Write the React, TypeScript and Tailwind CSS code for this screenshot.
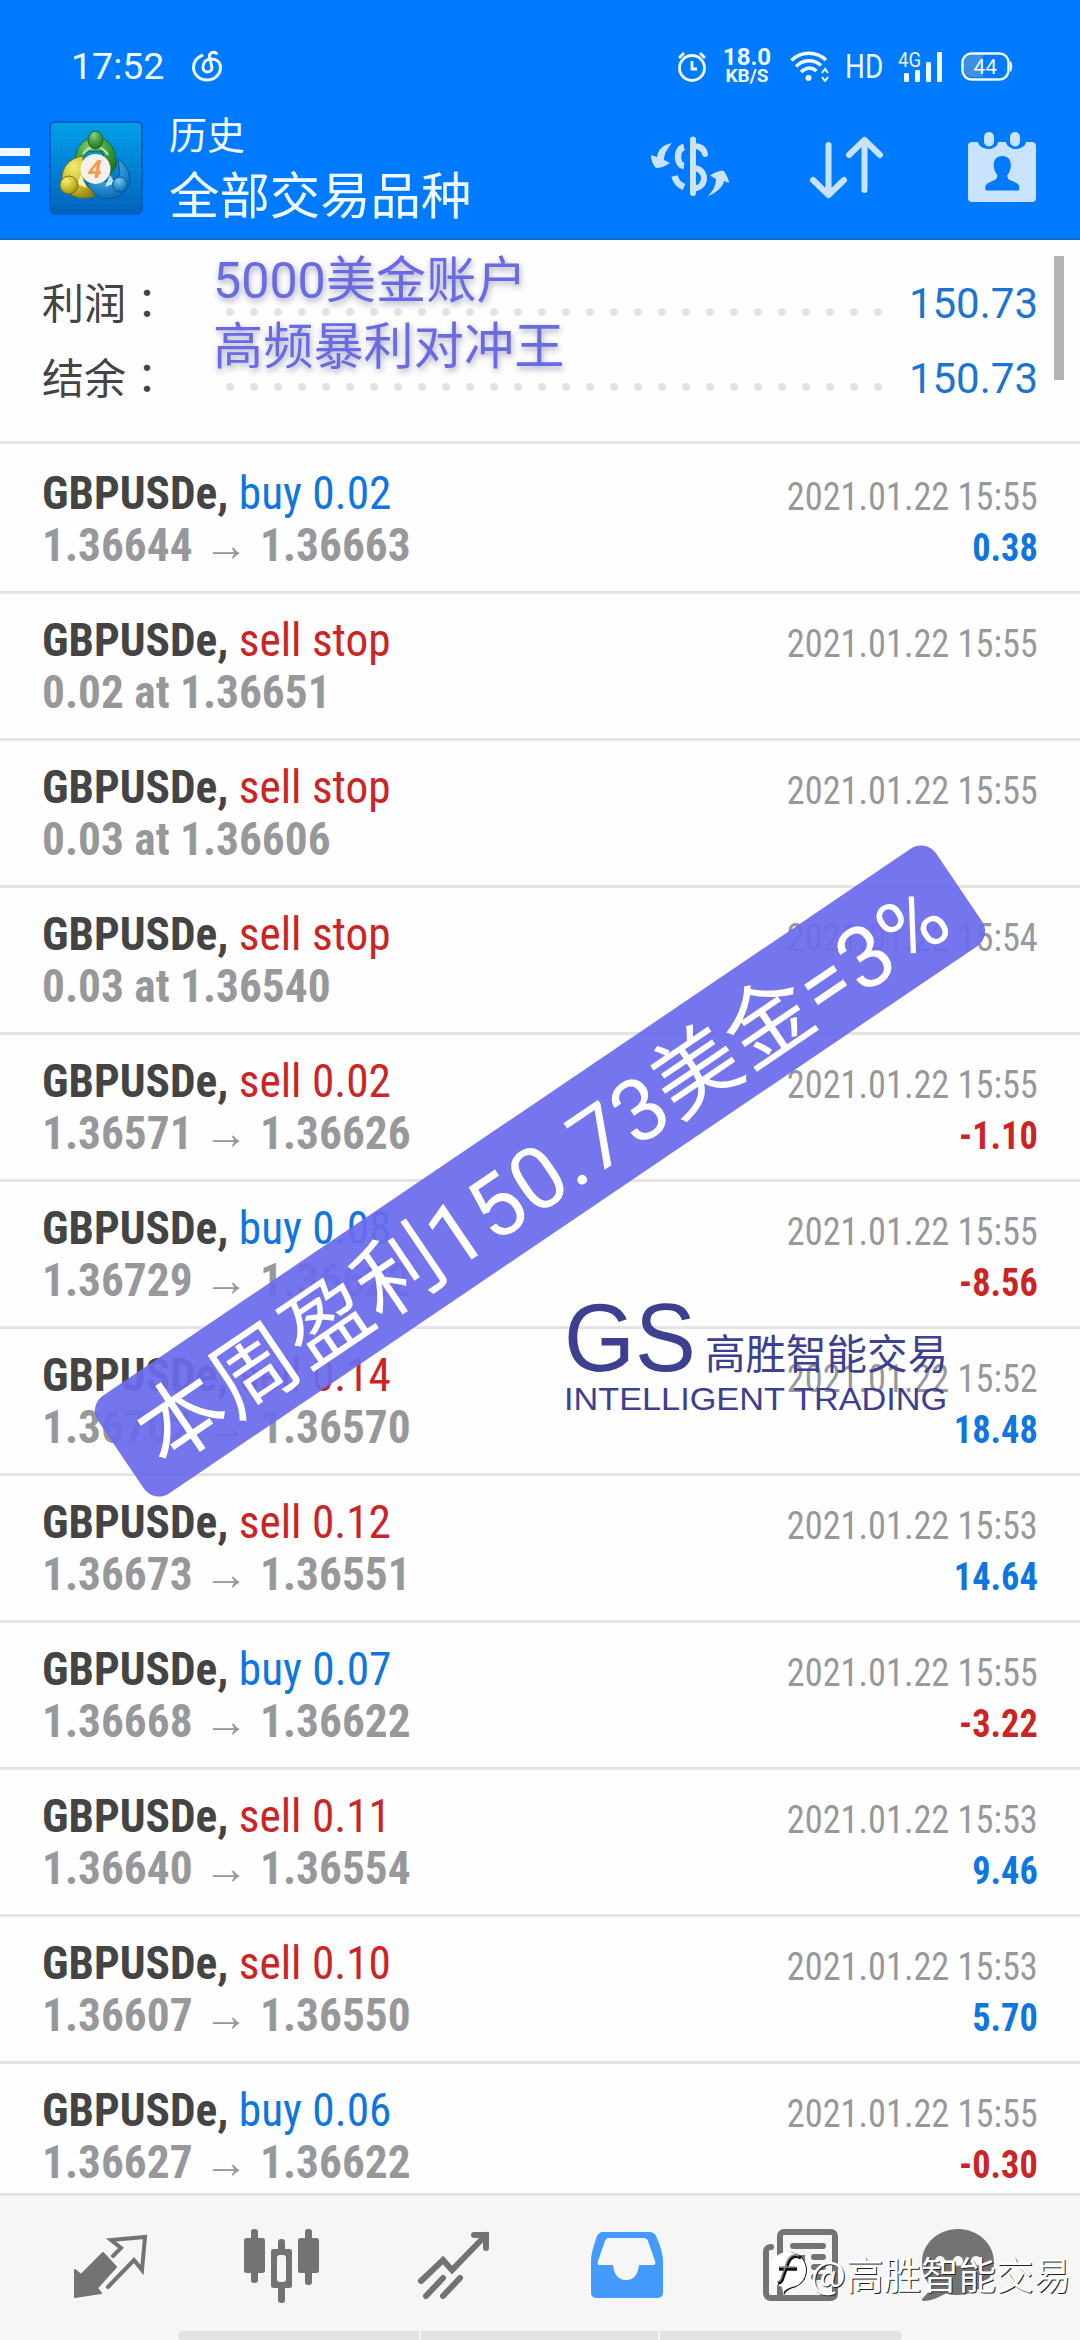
type Trade = {
  side: 'buy' | 'sell';
  action: string;
  detail: string;
  target?: string;
  time: string;
  profit?: string;
};

const trades: Trade[] = [
  { side: 'buy', action: 'buy 0.02', detail: '1.36644', target: '1.36663', time: '15:55', profit: '0.38' },
  { side: 'sell', action: 'sell stop', detail: '0.02 at 1.36651', time: '15:55' },
  { side: 'sell', action: 'sell stop', detail: '0.03 at 1.36606', time: '15:55' },
  { side: 'sell', action: 'sell stop', detail: '0.03 at 1.36540', time: '15:54' },
  { side: 'sell', action: 'sell 0.02', detail: '1.36571', target: '1.36626', time: '15:55', profit: '-1.10' },
  { side: 'buy', action: 'buy 0.08', detail: '1.36729', target: '1.36622', time: '15:55', profit: '-8.56' },
  { side: 'sell', action: 'sell 0.14', detail: '1.36702', target: '1.36570', time: '15:52', profit: '18.48' },
  { side: 'sell', action: 'sell 0.12', detail: '1.36673', target: '1.36551', time: '15:53', profit: '14.64' },
  { side: 'buy', action: 'buy 0.07', detail: '1.36668', target: '1.36622', time: '15:55', profit: '-3.22' },
  { side: 'sell', action: 'sell 0.11', detail: '1.36640', target: '1.36554', time: '15:53', profit: '9.46' },
  { side: 'sell', action: 'sell 0.10', detail: '1.36607', target: '1.36550', time: '15:53', profit: '5.70' },
  { side: 'buy', action: 'buy 0.06', detail: '1.36627', target: '1.36622', time: '15:55', profit: '-0.30' },
];

const StatusBar = () => (
  <div className="flex h-[104px] items-end justify-between pr-[67px] pb-[15px] pl-[71px] text-[#eefaff]">
    <div className="flex h-[46px] items-center gap-[27px]">
      <span className="w-[93px] font-[Roboto,sans-serif] text-[37.500px] leading-[46px]">17:52</span>
      <svg className="h-8 w-8" viewBox="0 0 32 32" fill="none" stroke="currentColor" strokeWidth="3" strokeLinecap="round">
        <path d="M11 5.500C5 8 2.500 13 2.500 17.500a13.500 12.500 0 0 0 27 0C29.500 11 24 8.500 19 9 14 9.500 12 14 12 17.500a4.500 4.500 0 0 0 9 0L18.500 7C18 3 22 1 25.500 3.500" />
      </svg>
    </div>
    <div className="flex h-[46px] items-center">
      {/* Alarm */}
      <svg className="h-8 w-[30px]" viewBox="0 0 30 32" fill="none" stroke="currentColor" strokeWidth="2.8">
        <circle cx="15" cy="18" r="12.500" />
        <path d="M15 11v8h5M2 8l5-5M28 8l-5-5" />
      </svg>
      <div className="ml-4 flex w-[48px] flex-col items-center font-[Roboto,sans-serif] font-bold">
        <span className="text-[24px] leading-[20px]">18.0</span>
        <span className="text-[19px] leading-[18px]">KB/S</span>
      </div>
      {/* Wifi */}
      <svg className="ml-[19px] h-8 w-10" viewBox="0 0 40 32" fill="none" stroke="currentColor" strokeWidth="3.5">
        <path d="M1.500 10.500C11 1 26 1 36 10M6 16.500C13 9 24 9 31 15.500M11 22C16 17 22 17 26.500 21" />
        <circle cx="18.500" cy="28" r="3" fill="currentColor" stroke="none" />
        <path d="M32 23l3-4 3 4M32 27l3 4 3-4" strokeWidth="2" />
      </svg>
      <span className="ml-[15px] w-9 font-[Roboto,sans-serif] text-[34px] leading-[46px]">
        <span className="inline-block origin-left scale-x-[0.82]">HD</span>
      </span>
      {/* Mobile signal */}
      <svg className="ml-[17px] h-10 w-[46px]" viewBox="0 -4 46 40" fill="currentColor">
        <text x="0" y="17" fontSize="21" fontFamily="Roboto, sans-serif" textLength="23" lengthAdjust="spacingAndGlyphs">4G</text>
        <rect x="6" y="23" width="5" height="9" rx="1" />
        <rect x="17" y="20" width="5" height="12" rx="1" />
        <rect x="28" y="12" width="5" height="20" rx="1" />
        <rect x="39" y="2" width="5" height="30" rx="1" />
      </svg>
      {/* Battery */}
      <svg className="ml-[17px] h-8 w-[52px]" viewBox="0 0 52 32" fill="none">
        <path d="M11 5h11v22H11a8 8 0 0 1-8-8v-6a8 8 0 0 1 8-8z" fill="#3d8fe0" />
        <rect x="1.500" y="3.500" width="46" height="26" rx="9" stroke="currentColor" strokeWidth="2.500" />
        <path d="M49 11c3 1 3 10 0 11z" fill="currentColor" />
        <text x="12.500" y="24" fontSize="21" fontFamily="Roboto, sans-serif" fill="currentColor">44</text>
      </svg>
    </div>
  </div>
);

const AppLogo = () => (
  <svg className="h-24 w-24" viewBox="0 0 96 96">
    <defs>
      <linearGradient id="tile" x1="0" y1="0" x2="0" y2="1">
        <stop offset="0" stopColor="#00a0ea" />
        <stop offset="1" stopColor="#0062bd" />
      </linearGradient>
      <radialGradient id="green" cx="0.4" cy="0.25" r="0.8">
        <stop offset="0" stopColor="#8fd07c" />
        <stop offset="0.5" stopColor="#3f9f3e" />
        <stop offset="1" stopColor="#1c6d2a" />
      </radialGradient>
      <radialGradient id="yellow" cx="0.35" cy="0.25" r="0.9">
        <stop offset="0" stopColor="#f4ec70" />
        <stop offset="0.6" stopColor="#c5b41f" />
        <stop offset="1" stopColor="#7d7a14" />
      </radialGradient>
      <radialGradient id="sky" cx="0.4" cy="0.25" r="0.9">
        <stop offset="0" stopColor="#7cc8ee" />
        <stop offset="0.6" stopColor="#1f86cc" />
        <stop offset="1" stopColor="#075a9c" />
      </radialGradient>
    </defs>
    <rect x="2" y="2" width="92" height="92" rx="5" fill="url(#tile)" stroke="#0560c0" strokeWidth="2" />
    <path d="M16 2v92M32 2v92M48 2v92M64 2v92M80 2v92M2 18h92M2 34h92M2 50h92M2 66h92M2 82h92" stroke="#ffffff" strokeOpacity="0.05" />
    <path d="M27 44C26 26 38 17 47.500 17S70 26 68 47l-6 8-8-24H41z" fill="url(#green)" stroke="#1d6630" />
    <path d="M35 34c3-5 8-7 12-7s10 2 13 8" fill="none" stroke="#b9e6a8" strokeWidth="2" />
    <path d="M70 39c10 6 14 18 10 28-5 9-16 13-25 11-8-2-14-9-16-15l24-2 9-6z" fill="url(#sky)" stroke="#0c5793" />
    <path d="M35 36c-14 2-21 12-21 22 0 13 12 21 24 20 4 0 7-1 9-3L36 62z" fill="url(#yellow)" stroke="#77731b" />
    <path d="M33 55l-4 9 10 4zM62 55l5 8-10 4z" fill="#ffffff" fillOpacity="0.75" />
    <ellipse cx="47.500" cy="20" rx="7.500" ry="9" fill="url(#green)" stroke="#1d6630" />
    <circle cx="21" cy="65" r="9" fill="url(#yellow)" stroke="#77731b" />
    <circle cx="72" cy="64.500" r="7.500" fill="url(#sky)" stroke="#0c5793" />
    <circle cx="47.500" cy="49" r="15" fill="#f3f0ee" />
    <text x="47" y="58" textAnchor="middle" fontSize="25" fontWeight="700" fontStyle="italic" fontFamily="Roboto, sans-serif" fill="#f79a4c">4</text>
  </svg>
);

const TitleBar = () => (
  <div className="flex h-[136px] items-start">
    <div className="mt-11 flex w-[30px] flex-col gap-[10px]">
      <div className="h-2 bg-[#eefaff]" />
      <div className="h-2 bg-[#eefaff]" />
      <div className="h-2 bg-[#eefaff]" />
    </div>
    <div className="mt-4 ml-[18px]">
      <AppLogo />
    </div>
    <div className="mt-[3px] ml-[25px] flex flex-col font-['Noto_Sans_CJK_SC',sans-serif] text-[#eefaff]">
      <span className="text-[38px] leading-[52px]">历史</span>
      <span className="text-[50.400px] leading-[68px]">全部交易品种</span>
    </div>
    <div className="mt-7 ml-auto flex items-start pr-[42px] text-[#c9e3ff]">
      {/* Symbol filter */}
      <svg className="h-[72px] w-20" viewBox="0 0 80 72" fill="none" stroke="currentColor">
        <path d="M43 7.500v53.500" strokeWidth="6" strokeLinecap="round" />
        <path d="M43 14c7 0 11 3 12 8M43 36c7 0 11 5 11 10.500S50 56 43 57" strokeWidth="6" strokeLinecap="round" />
        <path d="M34 15c-8 2-8 18 0 19M34 55c-5-2-8-5-9.500-11" strokeWidth="6.500" />
        <path d="M22 11C12 13 8 18 7 25L1 23C1 29 4 34 6 36C10 36 16 34 20 31L14 28C14 22 17 17 22 11z" fill="currentColor" stroke="none" />
        <path d="M58 64C68 60 73 54 74 49L79 51C79 47 76 43 74 39C70 38 64 41 60 43.500L66 47C66 53 63 59 58 64z" fill="currentColor" stroke="none" />
      </svg>
      {/* Sort */}
      <svg className="ml-[77px] h-[72px] w-20" viewBox="0 0 80 72" fill="none" stroke="currentColor" strokeWidth="6" strokeLinecap="round" strokeLinejoin="round">
        <path d="M21.500 13v50M6 48l15.500 15L37 48M57.500 58V8M42 23L57.500 8 73 23" />
      </svg>
      {/* Period */}
      <svg className="ml-[79px] h-[74px] w-[72px]" viewBox="0 0 72 74" fill="currentColor">
        <path d="M6 10h6c1 9 20 9 20 0h8c1 9 19 9 20 0h6a4 4 0 0 1 4 4v52a4 4 0 0 1-4 4H6a4 4 0 0 1-4-4V14a4 4 0 0 1 4-4z" />
        <rect x="15.500" y="-3" width="15" height="20" rx="7.500" fill="#007aff" />
        <rect x="41.500" y="-3" width="15" height="20" rx="7.500" fill="#007aff" />
        <rect x="18" y="0" width="10" height="14.500" rx="5" />
        <rect x="44" y="0" width="10" height="14.500" rx="5" />
        <path d="M36.300 24c6 0 9 4.500 8.500 10-.3 4-1.500 7-3.500 9 0 5 3 5 7 7 5 2 5 4 5 7a1.500 1.500 0 0 1-1.500 1.500h-31a1.500 1.500 0 0 1-1.500-1.500c0-3 0-5 5-7 4-2 7-2 7-7-2-2-3.200-5-3.500-9-.5-5.500 2.500-10 8.500-10z" fill="#007aff" />
      </svg>
    </div>
  </div>
);

const SummaryLine = ({ label, value }: { label: string; value: string }) => (
  <div className="flex h-[75px] items-center">
    <span className="-mt-1.5 w-[176px] font-['Noto_Sans_CJK_TC',sans-serif] text-[42px] leading-[69px] text-[#444]">{label}：</span>
    <div className="mt-4 h-2 w-[672px] bg-[radial-gradient(circle,#e3e3e3_3.5px,transparent_4.5px)] bg-[length:24px_8px]" />
    <span className="ml-auto font-[Roboto,sans-serif] text-[42px] leading-[75px] text-[#1c74d2]">{value}</span>
  </div>
);

const Summary = () => (
  <div className="relative h-[204px] border-b-[3px] border-[#e4e4e4] pt-[26px] pr-[42px] pl-[42px]">
    <SummaryLine label="利润" value="150.73" />
    <SummaryLine label="结余" value="150.73" />
    <div className="absolute top-4 right-4 h-[124px] w-[10px] bg-[#b3b3b3]" />
    <div className="absolute top-[8px] left-[213px] font-[Roboto,'Noto_Sans_CJK_SC',sans-serif] text-[50.200px] leading-[66px] text-[#6a6ae2] [text-shadow:1px_3px_6px_rgba(60,60,120,0.45)]">
      <div>5000美金账户</div>
      <div>高频暴利对冲王</div>
    </div>
  </div>
);

const TradeRow = ({ trade }: { trade: Trade }) => (
  <div className="flex h-[147px] shrink-0 justify-between border-b-[3px] border-[#e4e4e4] px-[42px] font-['Roboto_Condensed',Roboto,sans-serif] [font-stretch:75%]">
    <div className="origin-left scale-x-[0.964] pt-5 text-[47px] leading-[52px] whitespace-nowrap">
      <div>
        <span className="font-bold text-[#444]">GBPUSDe, </span>
        <span className={trade.side === 'buy' ? 'text-[#0f76e0]' : 'text-[#cc2424]'}>{trade.action}</span>
      </div>
      <div className="flex font-bold text-[#97989b]">
        <span>{trade.detail}</span>
        {trade.target && (
          <>
            <span className="w-[70px] text-center font-['Liberation_Sans',sans-serif] text-[46px] font-normal">→</span>
            <span>{trade.target}</span>
          </>
        )}
      </div>
    </div>
    <div className="origin-right scale-x-[0.955] pt-[25px] text-right text-[38px] leading-[51px]">
      <div className="text-[#97989b]">2021.01.22 {trade.time}</div>
      {trade.profit && (
        <div className={trade.profit.startsWith('-') ? 'font-bold text-[#cc2424]' : 'font-bold text-[#0f76e0]'}>
          {trade.profit}
        </div>
      )}
    </div>
  </div>
);

/** Sticker placed across the list with the weekly result */
const ProfitBanner = () => (
  <div className="absolute top-[1112px] left-[34px] flex h-[118px] w-[1012px] -rotate-[34.1deg] items-center justify-center rounded-[18px] bg-[#6a6cec]/93 pt-3 font-[Roboto,'Noto_Sans_CJK_SC',sans-serif] text-[86.500px] leading-[106px] tracking-[0.9px] whitespace-nowrap text-white">
    本周盈利150.73美金=3%
  </div>
);

const BrandMark = () => (
  <div className="absolute top-[1296px] left-[564px] flex flex-col text-[#3d4090]">
    <div className="flex items-end">
      <span className="w-[141px] font-['Liberation_Sans',sans-serif] text-[96px] leading-[84px]">
        <span className="inline-block origin-left scale-x-[0.95]">GS</span>
      </span>
      <span className="mb-[3px] font-['Noto_Sans_CJK_SC',sans-serif] text-[40.500px] leading-[50px]">高胜智能交易</span>
    </div>
    <span className="origin-left scale-x-[1.105] self-start font-['Liberation_Sans',sans-serif] text-[31px] leading-[40px] whitespace-nowrap">
      INTELLIGENT TRADING
    </span>
  </div>
);

const TabBar = () => (
  <div className="h-[147px] shrink-0 border-t-[3px] border-[#e2e2e2] bg-[#f6f6f6]">
    <div className="flex h-[135px] items-start pt-[30px] pl-[70px] text-[#737373]">
      {/* Quotes */}
      <svg className="h-20 w-20" viewBox="0 0 80 80" fill="none" stroke="currentColor">
        <path d="M5 44l6 5 22-22 13 14-19 21 4 5-26 4z" fill="currentColor" strokeWidth="2" strokeLinejoin="round" />
        <path d="M43 30l8-8-10-8 34-3-3 33-8-10-26 27" strokeWidth="4" strokeLinecap="round" />
      </svg>
      {/* Charts */}
      <svg className="ml-[92px] h-20 w-20" viewBox="0 0 80 80" fill="currentColor">
        <rect x="9" y="3" width="7" height="54" rx="3" />
        <rect x="2" y="12" width="21" height="35" rx="2.500" />
        <rect x="36" y="13" width="7" height="64" rx="3" />
        <rect x="29" y="23" width="21" height="39" rx="2.500" />
        <rect x="35" y="29" width="9" height="27" rx="3" fill="#f6f6f6" />
        <rect x="63" y="3" width="7" height="56" rx="3" />
        <rect x="56" y="12" width="21" height="35" rx="2.500" />
      </svg>
      {/* Trade */}
      <svg className="ml-[92px] h-20 w-20" viewBox="0 0 80 80" fill="none" stroke="currentColor" strokeWidth="6" strokeLinecap="round">
        <path d="M7 55l22-21 9 10 34-35M60 9h12v13M12 70l17-18M29 70l17-18" />
      </svg>
      {/* History, the active tab */}
      <svg className="ml-[92px] h-20 w-20 text-[#449bfb]" viewBox="0 0 80 80" fill="currentColor">
        <path fillRule="evenodd" d="M17 6h46c4 0 6 2 7 4 4 9 7 17 7 26v31a5 5 0 0 1-5 5H10a5 5 0 0 1-5-5V36c0-9 3-17 6-26 1-2 3-4 6-4zm6 6c-2 0-3 1-4 3l-7 20c-1 3 0 4 3 4h12c1 9 5 15 13 15s12-6 13-15h13c3 0 4-1 3-4l-7-20c-1-2-2-3-4-3z" />
      </svg>
      {/* News */}
      <svg className="ml-[95px] h-20 w-20" viewBox="0 0 80 80" fill="none" stroke="currentColor" strokeWidth="6" strokeLinecap="round">
        <rect x="19" y="6" width="55" height="66" rx="4" />
        <path d="M10 21c-3 0-5 2-5 4v42c0 3 2 5 5 5h12M32 20h30M53 31h9M53 41h9M53 51h9M32 32h9v19h-9z" />
      </svg>
      {/* Messages */}
      <svg className="ml-[77px] h-20 w-20" viewBox="0 0 80 80" fill="currentColor">
        <path d="M40 3c20 0 36 15 36 33S60 69 40 69c-5 0-8-.5-12-1.500C20 72 12 75 6 75c-2 0-3-1-1-3 4-4 7-8 8-11C7 54 4 46 4 36 4 18 20 3 40 3z" />
        <circle cx="22" cy="35" r="5" fill="#f6f6f6" />
        <circle cx="40" cy="35" r="5" fill="#f6f6f6" />
        <circle cx="58" cy="35" r="5" fill="#f6f6f6" />
      </svg>
    </div>
    <div className="ml-[178px] flex h-[9px] w-[724px] gap-[2px] overflow-hidden rounded-full">
      <div className="w-[241px] bg-[#e2e2e2]" />
      <div className="w-[237px] bg-[#e2e2e2]" />
      <div className="flex-1 bg-[#e2e2e2]" />
    </div>
  </div>
);

const Watermark = () => (
  <div className="absolute right-[9px] bottom-[40px] flex items-center gap-[2px] font-['Noto_Sans_CJK_SC',sans-serif] text-[37.500px] leading-[54px] whitespace-nowrap text-white [text-shadow:1px_1px_0_#222]">
    <svg className="h-[46px] w-[42px]" viewBox="0 0 42 46" fill="none">
      <path d="M22 2c10 0 18 8 18 18 0 9-6 16-14 18-4 1-7 3-9 7l-1-6 2-2z" fill="#111" />
      <path d="M21 2a18 18 0 0 1 18 18c0 9-6 16-14 17-4 1-7 3-9 6l-1-6A18 18 0 0 1 21 2z" fill="#fff" />
      <path d="M34 8c-7-4-11 0-13 5l-6 17c-1 2-2 3-4 3M12 19h18" stroke="#111" strokeWidth="3.500" />
      <path d="M32 6c-6-3-10 1-12 6l-6 17c-1 2-2 3-4 3M12 17h16" stroke="#8a8a8a" strokeWidth="1.500" />
    </svg>
    <span>@高胜智能交易</span>
  </div>
);

export default function App() {
  return (
    <div className="relative flex h-[2340px] w-[1080px] flex-col overflow-hidden bg-[#fefefe]">
      <header className="h-[240px] shrink-0 border-b-2 border-[#1267c9] bg-[#007aff]">
        <StatusBar />
        <TitleBar />
      </header>
      <Summary />
      <main className="flex min-h-0 flex-1 flex-col overflow-hidden pt-[3px]">
        {trades.map((trade, i) => (
          <TradeRow key={i} trade={trade} />
        ))}
      </main>
      <TabBar />
      <BrandMark />
      <ProfitBanner />
      <Watermark />
    </div>
  );
}
